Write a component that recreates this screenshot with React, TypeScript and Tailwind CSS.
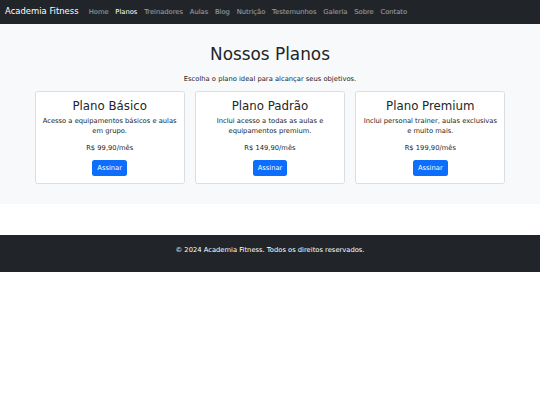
import React from "react";

const links = [
	"Home",
	"Planos",
	"Treinadores",
	"Aulas",
	"Blog",
	"Nutrição",
	"Testemunhos",
	"Galeria",
	"Sobre",
	"Contato",
];

const plans = [
	{
		name: "Plano Básico",
		desc: "Acesso a equipamentos básicos e aulas em grupo.",
		price: "R$ 99,90/mês",
	},
	{
		name: "Plano Padrão",
		desc: "Inclui acesso a todas as aulas e equipamentos premium.",
		price: "R$ 149,90/mês",
	},
	{
		name: "Plano Premium",
		desc: "Inclui personal trainer, aulas exclusivas e muito mais.",
		price: "R$ 199,90/mês",
	},
];

const App = () => {
	return (
		<div className="min-h-[405px] bg-white text-[#212529] font-['DejaVu_Sans',sans-serif] text-[6.75px] leading-[10.125px]">
			<nav className="bg-[#212529] py-[3.375px] h-[23.6px]">
				<div className="flex items-center px-[5.0625px]">
					<a className="text-white text-[8.4375px] leading-[12.66px] py-[2.11px] mr-[6.75px]">
						Academia Fitness
					</a>
					<ul className="flex">
						{links.map((l) => (
							<li key={l}>
								<a
									className={
										l === "Planos"
											? "block px-[3.375px] py-[3.375px] text-white"
											: "block px-[3.375px] py-[3.375px] text-white/55"
									}
								>
									{l}
								</a>
							</li>
						))}
					</ul>
				</div>
			</nav>

			<section className="bg-[#f8f9fa] py-[20.25px]">
				<div className="mx-auto w-[481px] px-[5.0625px]">
					<h1 className="text-center text-[16.875px] leading-[20.25px] mb-[10.125px]">
						Nossos Planos
					</h1>
					<p className="text-center mb-[6.75px]">
						Escolha o plano ideal para alcançar seus objetivos.
					</p>
					<div className="grid grid-cols-3 gap-[10.125px]">
						{plans.map((p) => (
							<div
								key={p.name}
								className="bg-white border border-[#dcdddf] rounded-[2.5px] px-[6.75px] py-[6.5px] text-center"
							>
								<h3 className="text-[11.8125px] leading-[14.175px] mb-[3.375px]">
									{p.name}
								</h3>
								<p className="mb-[6.75px]">{p.desc}</p>
								<p className="mb-[6.75px]">{p.price}</p>
								<button className="bg-[#0d6efd] text-white rounded-[2.5px] px-[5.0625px] py-[2.95px]">
									Assinar
								</button>
							</div>
						))}
					</div>
				</div>
			</section>

			<footer className="mt-[31.6px] bg-[#212529] text-white text-center py-[10.125px]">
				<p className="mb-[6.75px]">
					© 2024 Academia Fitness. Todos os direitos reservados.
				</p>
			</footer>
		</div>
	);
};

export default App;
